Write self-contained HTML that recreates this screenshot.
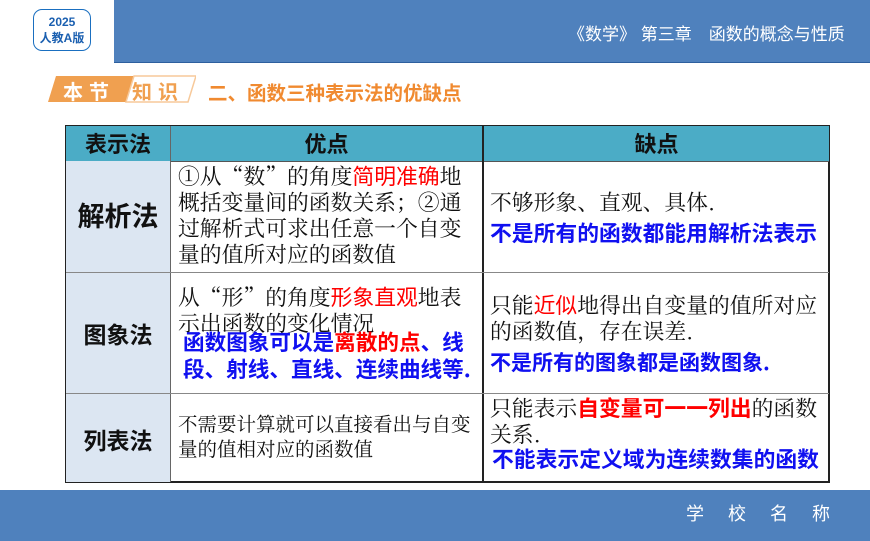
<!DOCTYPE html><html><head><meta charset="utf-8"><style>
body{margin:0;width:870px;height:541px;position:relative;background:#fff;overflow:hidden;font-family:"Noto Serif CJK SC","Liberation Serif",serif;}
.a{position:absolute;white-space:nowrap}
.s{font-family:"Liberation Sans","Noto Sans CJK SC",sans-serif}
.r{color:#f00;font-family:"Noto Sans CJK SC",sans-serif}
.b{color:#1010f0;font-family:"Noto Sans CJK SC",sans-serif;font-weight:bold}
.t{font-size:21.8px;line-height:26px;color:#111}
.lab{font-family:"Noto Sans CJK SC",sans-serif;font-weight:bold;color:#111;text-align:center}
</style></head><body>
<div class="a" style="left:114px;top:0;width:756px;height:62px;background:#4f81bd;border-bottom:1px solid #2d5f9e"></div>
<div class="a s" style="left:568px;top:20px;font-size:17px;color:#fff">《数学》 第三章　函数的概念与性质</div>
<div class="a s" style="left:33px;top:9px;width:58px;height:42px;border:1.5px solid #1a6fc0;border-radius:9px;text-align:center;color:#1a5fb0;font-weight:bold;font-size:12px;line-height:16px;padding-top:4px;box-sizing:border-box">2025<br>人教A版</div>
<svg class="a" style="left:46px;top:74px" width="150" height="30"><polygon points="10,2 88,2 80,28 2,28" fill="#f0a050"/><polygon points="88,2 150,2 142,28 80,28" fill="#fff" stroke="#f7c99a" stroke-width="1.5"/></svg>
<div class="a s" style="left:63px;top:76px;font-size:20px;font-weight:bold;color:#fff;letter-spacing:6px">本节</div>
<div class="a s" style="left:132px;top:76px;font-size:20px;font-weight:bold;color:#f0a050;letter-spacing:6px">知识</div>
<div class="a s" style="left:208px;top:77px;font-size:19.5px;font-weight:bold;color:#f08a30">二、函数三种表示法的优缺点</div>
<div class="a" style="left:65px;top:125px;width:765px;height:358px;border:2px solid #222;box-sizing:border-box"></div>
<div class="a" style="left:66px;top:126px;width:763px;height:35px;background:#4bacc6;border-bottom:1px solid #555"></div>
<div class="a" style="left:66px;top:161px;width:104px;height:321px;background:#dce6f2"></div>
<div class="a" style="left:170px;top:126px;width:1px;height:356px;background:#666"></div>
<div class="a" style="left:482px;top:126px;width:2px;height:356px;background:#222"></div>
<div class="a" style="left:66px;top:272px;width:763px;height:1px;background:#888"></div>
<div class="a" style="left:66px;top:393px;width:763px;height:1px;background:#888"></div>
<div class="a lab" style="left:66px;top:128px;width:104px;font-size:22px;line-height:30px">表示法</div>
<div class="a lab" style="left:171px;top:128px;width:311px;font-size:22px;line-height:30px">优点</div>
<div class="a lab" style="left:484px;top:128px;width:345px;font-size:22px;line-height:30px">缺点</div>
<div class="a lab" style="left:66px;top:197px;width:104px;font-size:27px;line-height:36px">解析法</div>
<div class="a lab" style="left:66px;top:317px;width:104px;font-size:23px;line-height:32px">图象法</div>
<div class="a lab" style="left:66px;top:423px;width:104px;font-size:23px;line-height:32px">列表法</div>
<div class="a t" style="left:178px;top:163px">①从“数”的角度<span class="r">简明准确</span>地<br>概括变量间的函数关系；②通<br>过解析式可求出任意一个自变<br>量的值所对应的函数值</div>
<div class="a t" style="left:490px;top:189px">不够形象、直观、具体.</div>
<div class="a b" style="left:490px;top:219px;font-size:21.8px;line-height:28px">不是所有的函数都能用解析法表示</div>
<div class="a t" style="left:178px;top:284px">从“形”的角度<span class="r">形象直观</span>地表<br>示出函数的变化情况</div>
<div class="a b" style="left:183px;top:328px;font-size:21.6px;line-height:27px">函数图象可以是<span style="color:#f00">离散的点</span>、线<br>段、射线、直线、连续曲线等.</div>
<div class="a t" style="left:490px;top:292px">只能<span class="r">近似</span>地得出自变量的值所对应<br>的函数值，存在误差.</div>
<div class="a b" style="left:490px;top:348px;font-size:21px;line-height:28px">不是所有的图象都是函数图象.</div>
<div class="a t" style="left:178px;top:411px;font-size:19.5px;line-height:25px">不需要计算就可以直接看出与自变<br>量的值相对应的函数值</div>
<div class="a t" style="left:490px;top:395px">只能表示<span class="r" style="font-weight:bold">自变量可一一列出</span>的函数<br>关系.</div>
<div class="a b" style="left:492px;top:445px;font-size:21.8px;line-height:28px">不能表示定义域为连续数集的函数</div>
<div class="a" style="left:0;top:490px;width:870px;height:51px;background:#4f81bd"></div>
<div class="a s" style="left:686px;top:500px;font-size:18px;color:#fff;letter-spacing:24px">学校名称</div>
</body></html>
